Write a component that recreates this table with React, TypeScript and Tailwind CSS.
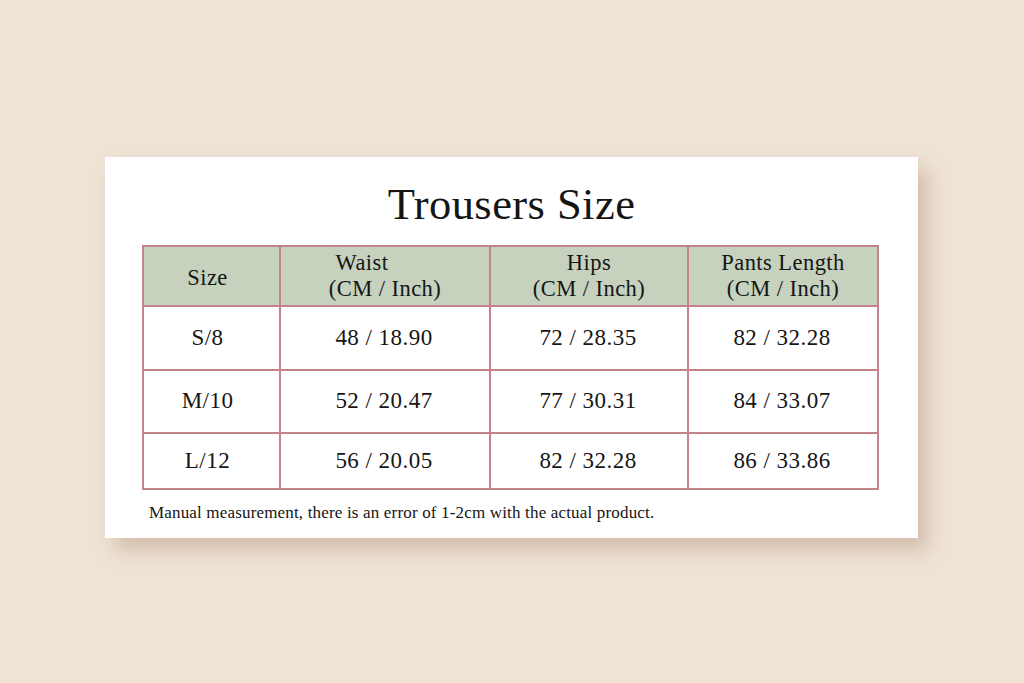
import React from "react";

const rows = [
  ["S/8", "48 / 18.90", "72 / 28.35", "82 / 32.28"],
  ["M/10", "52 / 20.47", "77 / 30.31", "84 / 33.07"],
  ["L/12", "56 / 20.05", "82 / 32.28", "86 / 33.86"],
];

const rowH = ["h-[64px]", "h-[63px]", "h-[56px]"];

export default function App() {
  return (
    <div
      className="w-[1024px] h-[683px] bg-[#efe3d6] flex flex-col items-start text-[#151515]"
      style={{ fontFamily: '"Liberation Serif", "Times New Roman", serif' }}
    >
      <div className="mt-[157px] ml-[105px] w-[813px] h-[381px] bg-white shadow-[10px_12px_18px_rgba(160,120,95,0.35)] flex flex-col px-[37px]">
        <h1 className="h-[88px] flex items-center justify-center text-[44.5px] leading-none pt-[6px] tracking-[0.01em]">
          Trousers Size
        </h1>
        <table className="w-[735px] border-collapse border-2 border-[#c2848a] table-fixed">
          <colgroup>
            <col className="w-[137px]" />
            <col className="w-[210px]" />
            <col className="w-[198px]" />
            <col className="w-[190px]" />
          </colgroup>
          <thead>
            <tr className="h-[60px] bg-[#c6d1be] text-[22.5px] leading-[26px] tracking-[0.02em]">
              <th className="font-normal border-2 border-[#c2848a] pt-[4px] pr-[8px]">Size</th>
              <th className="font-normal border-2 border-[#c2848a]">
                <div className="pr-[46px]">Waist</div>
                <div>(CM / Inch)</div>
              </th>
              <th className="font-normal border-2 border-[#c2848a]">
                <div>Hips</div>
                <div>(CM / Inch)</div>
              </th>
              <th className="font-normal border-2 border-[#c2848a]">
                <div>Pants Length</div>
                <div>(CM / Inch)</div>
              </th>
            </tr>
          </thead>
          <tbody>
            {rows.map((r, i) => (
              <tr key={r[0]} className={`${rowH[i]} text-[23px] tracking-[0.02em]`}>
                {r.map((c, j) => (
                  <td
                    key={j}
                    className={`text-center border-2 border-[#c2848a] ${j === 0 ? "pr-[8px]" : "pr-[2px]"}`}
                  >
                    {c}
                  </td>
                ))}
              </tr>
            ))}
          </tbody>
        </table>
        <p className="mt-[10px] ml-[7px] text-[17px] tracking-[0.01em]">
          Manual measurement, there is an error of 1-2cm with the actual product.
        </p>
      </div>
    </div>
  );
}
